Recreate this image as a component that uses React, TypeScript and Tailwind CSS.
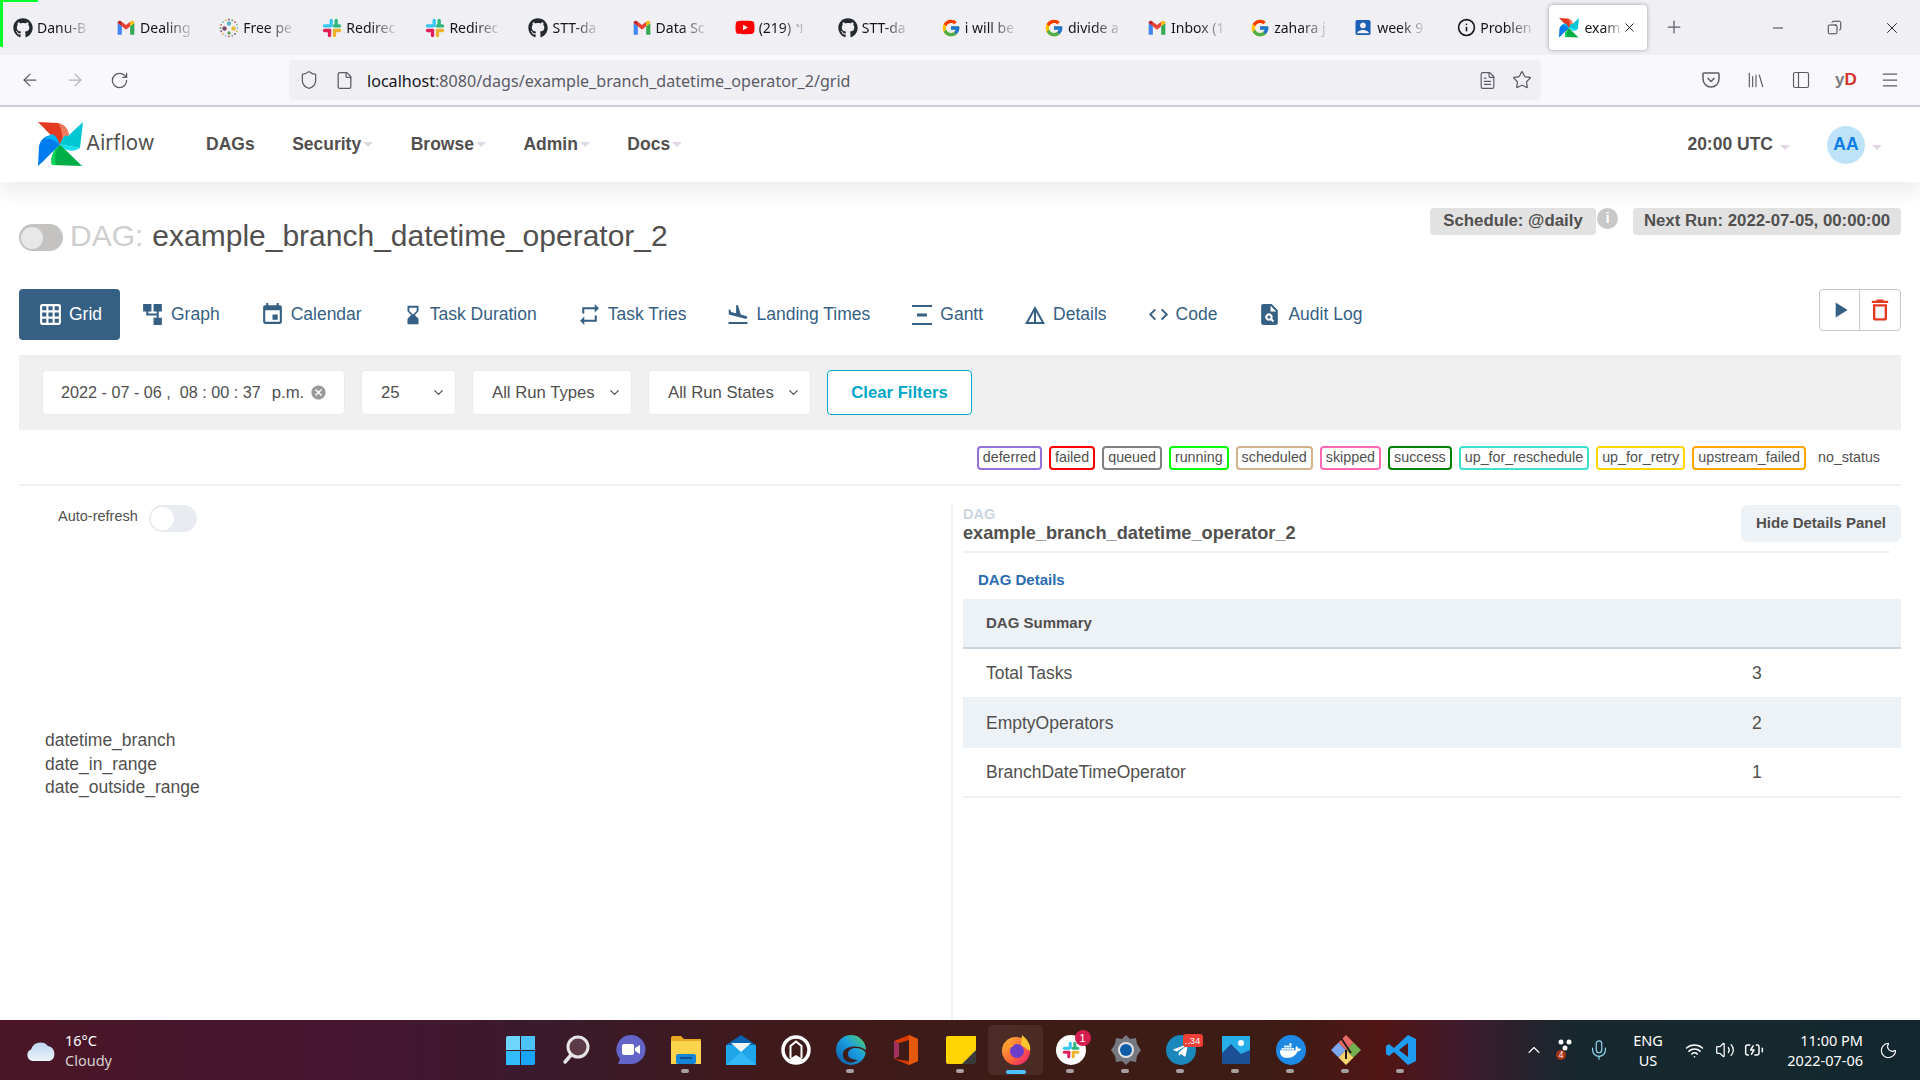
import type { ReactNode } from "react";
import { ArrowLeft, ArrowRight, RotateCw, Shield, File, Star, Menu, X, Plus, Minus, Copy, Info, ChevronDown, ChevronUp, Mic, Wifi, Volume2, Moon, BatteryCharging, FileText, PanelLeft, Library } from "lucide-react";
import { FaGithub, FaYoutube, FaDocker, FaTelegramPlane } from "react-icons/fa";
import { FcGoogle } from "react-icons/fc";
import { MdGridOn, MdAccountTree, MdEvent, MdHourglassBottom, MdRepeat, MdFlightLand, MdVerticalDistribute, MdDetails, MdCode, MdPlagiarism, MdPlayArrow, MdDeleteOutline, MdCancel, MdAccountBox } from "react-icons/md";

function PinWheel({ size = 45 }: { size?: number }) {
  return (
    <svg width={size} height={size} viewBox="0 0 45 45" className="shrink-0">
      <path d="M0 0 L20 1 C28 3 32 10 30 15 L22 22.5 Z" fill="#e43921" />
      <path d="M20 1 C28 3 32 10 30 15 L24 21 C25 14 24 7 20 1 Z" fill="#f37b5f" />
      <path d="M45 0 L42 26 L22 22.5 C24 16 27 12 30 14 Z" fill="#00c7d4" />
      <path d="M22 22.5 L42 26 L38 28 C32 30 26 28 22 22.5 Z" fill="#11e1ee" />
      <path d="M44 44 L14 43 C12 36 15 28 22 22.5 Z" fill="#00ad46" />
      <path d="M22 22.5 C18 27 16 36 18 43 L14 43 C12 36 15 28 22 22.5 Z" fill="#04d659" />
      <path d="M0 44 L1 24 C3 16 10 12 15 14 L22 22.5 C14 30 7 38 0 44 Z" fill="#017cee" />
      <path d="M12 13 C15 11 18 13 22 22.5 C17 18 12 16 6 17 Z" fill="#00b5f0" />
    </svg>
  );
}

function Gmail({ size = 20 }: { size?: number }) {
  return (
    <svg width={size} height={size} viewBox="0 0 24 24" className="shrink-0">
      <path d="M2 20 V6 l5 4 v10 H3.500 A1.500 1.500 0 0 1 2 20Z" fill="#4285f4" />
      <path d="M22 20 V6 l-5 4 v10 h3.500 A1.500 1.500 0 0 0 22 20Z" fill="#34a853" />
      <path d="M7 10 L12 14 L17 10 V4.500 L12 8.500 L7 4.500Z" fill="#ea4335" />
      <path d="M2 6 V5.500 C2 3.500 4.500 2.500 6 3.800 L7 4.500 V10Z" fill="#c5221f" />
      <path d="M22 6 V5.500 C22 3.500 19.500 2.500 18 3.800 L17 4.500 V10Z" fill="#fbbc04" />
    </svg>
  );
}

function SlackLogo({ size = 20 }: { size?: number }) {
  return (
    <svg width={size} height={size} viewBox="0 0 24 24" className="shrink-0">
      <rect x="9" y="1" width="4" height="10" rx="2" fill="#36c5f0" />
      <rect x="1" y="7.500" width="10" height="4" rx="2" fill="#36c5f0" />
      <rect x="13" y="7.500" width="10" height="4" rx="2" fill="#2eb67d" />
      <rect x="15" y="1" width="4" height="10" rx="2" fill="#2eb67d" />
      <rect x="13" y="13" width="10" height="4" rx="2" fill="#ecb22e" />
      <rect x="13" y="13" width="4" height="10" rx="2" fill="#ecb22e" />
      <rect x="1" y="13" width="10" height="4" rx="2" fill="#e01e5a" />
      <rect x="7" y="13" width="4" height="10" rx="2" fill="#e01e5a" />
    </svg>
  );
}

function Dots() {
  const cols = ["#7fb8c9", "#d8b33c", "#7b5a78", "#6b9e5a", "#c9655a"];
  const pts = Array.from({ length: 16 }, (_, i) => {
    const a = (i / 16) * Math.PI * 2;
    return [10 + Math.cos(a) * 8.5, 10 + Math.sin(a) * 8.5];
  });
  return (
    <svg width="20" height="20" viewBox="0 0 20 20" className="shrink-0">
      {pts.map((p, i) => (
        <circle key={i} cx={p[0]} cy={p[1]} r="0.900" fill={cols[i % 5]} />
      ))}
      <circle cx="10" cy="5.500" r="2.200" fill="#5bb4c4" />
      <circle cx="14.500" cy="10.500" r="2.200" fill="#e2bd3a" />
      <circle cx="5.500" cy="10.500" r="2.200" fill="#7a4a6d" />
      <circle cx="10" cy="15" r="1.800" fill="#6aa35a" />
    </svg>
  );
}

const browserTabs: { icon: ReactNode; text: string }[] = [
  { icon: <FaGithub size={20} className="text-[#24292f]" />, text: "Danu-B" },
  { icon: <Gmail />, text: "Dealing" },
  { icon: <Dots />, text: "Free pe" },
  { icon: <SlackLogo />, text: "Redirec" },
  { icon: <SlackLogo />, text: "Redirec" },
  { icon: <FaGithub size={20} className="text-[#24292f]" />, text: "STT-da" },
  { icon: <Gmail />, text: "Data Sc" },
  { icon: <FaYoutube size={21} className="text-[#ff0000]" />, text: "(219) ។" },
  { icon: <FaGithub size={20} className="text-[#24292f]" />, text: "STT-da" },
  { icon: <FcGoogle size={20} />, text: "i will be" },
  { icon: <FcGoogle size={20} />, text: "divide a" },
  { icon: <Gmail />, text: "Inbox (1" },
  { icon: <FcGoogle size={20} />, text: "zahara j" },
  { icon: <MdAccountBox size={23} className="text-[#1a5fb4]" />, text: "week 9" },
  { icon: <Info size={19} className="text-[#15141a]" />, text: "Problen" },
];

function TabStrip() {
  return (
    <div className="relative h-[55px] bg-[#f0f0f4] flex items-start pl-[3px] pt-[5px] shrink-0">
      <div className="absolute left-0 top-0 w-[38px] h-[2px] bg-[#00ff2a]" />
      <div className="absolute left-0 top-0 w-[3px] h-[47px] bg-[#00ff2a]" />
      {browserTabs.map((t, i) => (
        <div key={i} className="w-[103.100px] h-[45px] pl-[10px] flex items-center gap-[4px] shrink-0">
          <span className="w-[20px] flex justify-center shrink-0">{t.icon}</span>
          <span className="whitespace-nowrap text-[14px] text-[#15141a] [mask-image:linear-gradient(to_right,black_50%,rgba(0,0,0,0.15))] font-['Noto_Sans',sans-serif]">
            {t.text}
          </span>
        </div>
      ))}
      <div className="w-[98px] h-[45px] bg-white rounded-[4px] shadow-[0_0_4px_rgba(0,0,0,0.35)] pl-[10px] flex items-center gap-[5px] shrink-0">
        <PinWheel size={20} />
        <span className="whitespace-nowrap text-[14px] text-[#15141a] [mask-image:linear-gradient(to_right,black_55%,rgba(0,0,0,0.2))] font-['Noto_Sans',sans-serif]">
          exam
        </span>
        <X size={15} strokeWidth={1.5} className="text-[#15141a] -ml-[3px]" />
      </div>
      <Plus size={20} strokeWidth={1.5} className="text-[#5b5b66] ml-[17px] mt-[12px]" />
      <div className="ml-auto flex items-center h-[45px] pr-[19px] gap-[41px] text-[#15141a]">
        <Minus size={16} strokeWidth={1.2} />
        <Copy size={15} strokeWidth={1.3} className="-scale-x-100" />
        <X size={18} strokeWidth={1.2} />
      </div>
    </div>
  );
}

function BrowserBar() {
  return (
    <div className="h-[52px] bg-[#f9f9fb] border-b-2 border-[#cfcfd8] flex items-center shrink-0 text-[#5b5b66]">
      <div className="w-[289px] flex items-center pl-[20px] gap-[25px] shrink-0">
        <ArrowLeft size={20} strokeWidth={1.5} />
        <ArrowRight size={20} strokeWidth={1.5} className="text-[#b4b4ba]" />
        <RotateCw size={19} strokeWidth={1.6} />
      </div>
      <div className="w-[1252px] h-[40px] bg-[#f0f0f4] rounded-[4px] flex items-center pl-[10px] pr-[9px] shrink-0">
        <Shield size={20} strokeWidth={1.5} />
        <File size={19} strokeWidth={1.6} className="ml-[16px]" />
        <span className="ml-[13px] mt-[2px] text-[16.100px] whitespace-nowrap font-['Noto_Sans',sans-serif] text-[#5b5b66]">
          <span className="text-[#15141a]">localhost</span>:8080/dags/example_branch_datetime_operator_2/grid
        </span>
        <FileText size={19} strokeWidth={1.5} className="ml-auto" />
        <Star size={20} strokeWidth={1.5} className="ml-[15px]" />
      </div>
      <div className="flex-1 flex items-center pl-[160px] gap-[25px]">
        <svg width="20" height="20" viewBox="0 0 20 20" fill="none" stroke="currentColor" strokeWidth="1.500">
          <path d="M3 3 H17 Q18 3 18 4 V9 A8 8 0 0 1 2 9 V4 Q2 3 3 3Z" />
          <path d="M6.500 8 L10 11.500 L13.500 8" />
        </svg>
        <Library size={20} strokeWidth={1.4} />
        <PanelLeft size={20} strokeWidth={1.4} />
        <span className="w-[20px] -ml-[1px] text-[17px] font-bold font-['Liberation_Sans',sans-serif] whitespace-nowrap text-[#7b7b80]">
          y<span className="text-[#d6322c]">D</span>
        </span>
        <Menu size={20} strokeWidth={1.5} />
      </div>
    </div>
  );
}

function Caret() {
  return <span className="inline-block w-0 h-0 border-x-[5px] border-t-[5px] border-x-transparent border-t-[#e2d6e6]" />;
}

function NavBar() {
  const items = ["DAGs", "Security", "Browse", "Admin", "Docs"];
  return (
    <div className="relative z-10 h-[75px] bg-white shadow-[0_10px_20px_rgba(0,0,0,0.08)] flex items-center shrink-0 text-[#51504f]">
      <div className="ml-[38px] flex items-center w-[168px] shrink-0">
        <PinWheel />
        <span className="ml-[3px] -mt-[3px] text-[20.500px] font-['Inter',sans-serif] leading-none">Airflow</span>
      </div>
      <div className="flex items-center gap-[37.500px] text-[17.500px] font-bold">
        {items.map((it, i) => (
          <span key={it} className="flex items-center gap-[2px]">
            {it}
            {i > 0 && <Caret />}
          </span>
        ))}
      </div>
      <div className="ml-auto flex items-center pr-[38px]">
        <span className="text-[17.500px] font-bold">20:00 UTC</span>
        <span className="ml-[7px]"><Caret /></span>
        <span className="ml-[37px] w-[38px] h-[38px] rounded-full bg-[#bee3f8] text-[#0a7ce8] font-bold text-[17.500px] flex items-center justify-center">
          AA
        </span>
        <span className="ml-[7px]"><Caret /></span>
      </div>
    </div>
  );
}

function TitleRow() {
  return (
    <div className="h-[107px] flex items-start justify-between shrink-0">
      <div className="flex items-start">
        <span className="mt-[42px] w-[44px] h-[27px] rounded-full bg-[#c4c3c1] flex items-center pl-[2px]">
          <span className="w-[22px] h-[22px] rounded-full bg-[#e8e8e8]" />
        </span>
        <span className="ml-[7px] mt-[35px] text-[#cfcfcf] text-[30px] leading-[37px]">DAG:</span>
        <span className="ml-[9px] mt-[35px] text-[30px] leading-[37px] text-[#51504f]">example_branch_datetime_operator_2</span>
      </div>
      <div className="flex items-start mt-[26px] text-[16.800px] font-bold text-[#51504f]">
        <span className="h-[27px] pb-[1px] w-[166px] bg-[#e2e2e2] rounded-[4px] flex items-center justify-center">Schedule: @daily</span>
        <span className="ml-[1px] w-[21px] h-[21px] rounded-full bg-[#c8c8c8] text-white text-[15px] flex items-center justify-center">i</span>
        <span className="ml-[15px] h-[27px] pb-[1px] w-[268px] bg-[#e2e2e2] rounded-[4px] flex items-center justify-center">Next Run: 2022-07-05, 00:00:00</span>
      </div>
    </div>
  );
}

function ViewTabs() {
  const tabs = [
    { label: "Graph", icon: <MdAccountTree size={25} className="-scale-x-100 rotate-90" /> },
    { label: "Calendar", icon: <MdEvent size={25} /> },
    { label: "Task Duration", icon: <MdHourglassBottom size={22} /> },
    { label: "Task Tries", icon: <MdRepeat size={25} /> },
    { label: "Landing Times", icon: <MdFlightLand size={24} /> },
    { label: "Gantt", icon: <MdVerticalDistribute size={24} /> },
    { label: "Details", icon: <MdDetails size={24} /> },
    { label: "Code", icon: <MdCode size={23} /> },
    { label: "Audit Log", icon: <MdPlagiarism size={25} /> },
  ];
  return (
    <div className="h-[66px] flex items-start justify-between shrink-0">
      <div className="flex items-center text-[17.500px] text-[#365f84]">
        <span className="h-[51px] w-[101px] bg-[#365f84] text-white rounded-[4px] flex items-center pl-[19px] gap-[6px]">
          <MdGridOn size={25} />
          Grid
        </span>
        {tabs.map((t) => (
          <span key={t.label} className="h-[51px] flex items-center px-[20px] gap-[6px]">
            {t.icon}
            {t.label}
          </span>
        ))}
      </div>
      <div className="w-[82px] h-[42px] border border-[#c9c9c9] rounded-[4px] flex items-center">
        <span className="w-[40px] h-full flex items-center justify-center text-[#365f84] border-r border-[#c9c9c9]">
          <MdPlayArrow size={26} />
        </span>
        <span className="flex-1 flex items-center justify-center text-[#e43921]">
          <MdDeleteOutline size={28} />
        </span>
      </div>
    </div>
  );
}

function SelectBox({ label, width }: { label: string; width: string }) {
  return (
    <div className={`${width} h-[45px] bg-white rounded-[4px] border border-[#e6ebf1] flex items-center justify-between pl-[19px] pr-[9px] shrink-0`}>
      <span className="whitespace-nowrap">{label}</span>
      <ChevronDown size={15} strokeWidth={2} />
    </div>
  );
}

function Filters() {
  return (
    <div className="h-[75px] bg-[#f0f0f0] flex items-center pl-[23px] gap-[16px] text-[16.700px] text-[#51504f] shrink-0">
      <div className="w-[303px] h-[45px] bg-white rounded-[4px] border border-[#e6ebf1] flex items-center pl-[18px] pr-[17px] text-[16.200px] shrink-0">
        <span className="whitespace-pre">2022 - 07 - 06 ,  08 : 00 : 37</span>
        <span className="ml-[11px] text-[16.700px]">p.m.</span>
        <MdCancel size={17} className="ml-auto text-[#999]" />
      </div>
      <SelectBox label="25" width="w-[95px]" />
      <SelectBox label="All Run Types" width="w-[160px]" />
      <SelectBox label="All Run States" width="w-[163px]" />
      <div className="w-[145px] h-[45px] bg-white rounded-[4px] border border-[#00a7c7] text-[#00a7c7] font-bold flex items-center justify-center shrink-0">
        Clear Filters
      </div>
    </div>
  );
}

function Legend() {
  const states = [
    { name: "deferred", cls: "border-[#9370db]" },
    { name: "failed", cls: "border-[#ff0000]" },
    { name: "queued", cls: "border-[#808080]" },
    { name: "running", cls: "border-[#00ff00]" },
    { name: "scheduled", cls: "border-[#d2b48c]" },
    { name: "skipped", cls: "border-[#ff69b4]" },
    { name: "success", cls: "border-[#008000]" },
    { name: "up_for_reschedule", cls: "border-[#40e0d0]" },
    { name: "up_for_retry", cls: "border-[#ffd700]" },
    { name: "upstream_failed", cls: "border-[#ffa500]" },
  ];
  return (
    <div className="h-[56px] border-b-2 border-[#edf2f7] flex items-start justify-end gap-[7px] pt-[16px] pr-[21px] text-[14.300px] text-[#51504f] shrink-0">
      {states.map((s) => (
        <span key={s.name} className={`h-[24px] px-[4px] border-2 rounded-[4px] bg-white flex items-center ${s.cls}`}>
          {s.name}
        </span>
      ))}
      <span className="h-[24px] ml-[5px] flex items-center">no_status</span>
    </div>
  );
}

function GridPanel() {
  return (
    <div className="w-[932px] shrink-0 flex flex-col text-[#51504f]">
      <div className="flex items-center pl-[39px] pt-[19px]">
        <span className="text-[14.500px] mb-[4px]">Auto-refresh</span>
        <span className="ml-[11px] w-[48px] h-[27px] rounded-full bg-[#e8ecf1] flex items-center pl-[2px]">
          <span className="w-[23px] h-[23px] rounded-full bg-white" />
        </span>
      </div>
      <div className="mt-[197px] pl-[26px] text-[17.500px] leading-[23.700px]">
        <div>datetime_branch</div>
        <div>date_in_range</div>
        <div>date_outside_range</div>
      </div>
    </div>
  );
}

function DetailsPanel() {
  const rows = [
    { k: "Total Tasks", v: 3, cls: "h-[48px]" },
    { k: "EmptyOperators", v: 2, cls: "h-[51px] pt-[1px] bg-[#edf2f7]" },
    { k: "BranchDateTimeOperator", v: 1, cls: "h-[50px] border-b-2 border-[#edf2f7]" },
  ];
  return (
    <div className="flex-1 border-l-2 border-[#edf2f7] mt-[19px] pl-[10px] text-[#51504f]">
      <div className="h-[48px] flex items-start justify-between border-b-2 border-[#edf2f7] mr-[11px]">
        <div className="pt-[2px]">
          <div className="text-[14.500px] font-bold leading-[15px] text-[#cbd5e0]">DAG</div>
          <div className="text-[18.200px] font-bold leading-[23px]">example_branch_datetime_operator_2</div>
        </div>
        <div className="-mr-[11px] w-[160px] h-[37px] bg-[#edf2f7] rounded-[6px] font-bold text-[15px] flex items-center justify-center">
          Hide Details Panel
        </div>
      </div>
      <div className="h-[46px] pt-[8px] flex items-center pl-[15px] text-[15px] font-bold text-[#2b6cb0]">DAG Details</div>
      <div className="h-[50px] pt-[1px] bg-[#edf2f7] border-b-2 border-[#cbd5e0] flex items-center pl-[23px] text-[15px] font-bold">
        DAG Summary
      </div>
      {rows.map((r) => (
        <div key={r.k} className={`${r.cls} flex items-center text-[17.500px]`}>
          <span className="w-[789px] pl-[23px]">{r.k}</span>
          <span>{r.v}</span>
        </div>
      ))}
    </div>
  );
}

function Dock({ children, dot = true, active = false }: { children: ReactNode; dot?: boolean; active?: boolean }) {
  return (
    <div className={`relative w-[55px] h-[50px] flex items-center justify-center shrink-0 rounded-[5px] ${active ? "bg-white/[0.07]" : ""}`}>
      {children}
      {dot && !active && <span className="absolute bottom-[2px] left-[23px] w-[8px] h-[4px] rounded-full bg-[#a8a0a0]" />}
      {active && <span className="absolute bottom-[1px] left-[18px] w-[20px] h-[4px] rounded-full bg-[#4cc2ff]" />}
    </div>
  );
}

function Taskbar() {
  return (
    <div className="h-[60px] shrink-0 flex items-center text-white font-['Noto_Sans',sans-serif] bg-[linear-gradient(90deg,#4a1626_0%,#451530_18%,#3a1a2c_28%,#3f1a1c_40%,#3c1c14_55%,#3c1c14_66%,#511514_72%,#3f1a2c_76%,#17282e_82%,#12282e_100%)]">
      <div className="w-[493px] flex items-center pl-[26px] shrink-0">
        <svg width="30" height="24" viewBox="0 0 30 24">
          <defs>
            <linearGradient id="cloudFill" x1="0" y1="0" x2="0" y2="1">
              <stop offset="0" stopColor="#bcd6f2" />
              <stop offset="1" stopColor="#eef4fa" />
            </linearGradient>
          </defs>
          <path d="M7 23 A6 6 0 0 1 5 11.500 A10 10 0 0 1 22 8 A8 8 0 0 1 24 23 Z" fill="url(#cloudFill)" />
        </svg>
        <div className="ml-[9px] text-[14.500px] leading-[20px]">
          <div>16°C</div>
          <div className="text-[#d8d0d0]">Cloudy</div>
        </div>
      </div>
      <div className="flex items-center">
        <Dock dot={false}>
          <div className="grid grid-cols-2 gap-[1px] w-[29px] h-[29px]">
            <span className="bg-[#6fd6fb] rounded-tl-[2px]" />
            <span className="bg-[#4cc4fb]" />
            <span className="bg-[#33bcfb]" />
            <span className="bg-[#1aa5fa] rounded-br-[2px]" />
          </div>
        </Dock>
        <Dock dot={false}>
          <svg width="28" height="30" viewBox="0 0 28 30" fill="none">
            <circle cx="16" cy="12" r="10" fill="#5c3a48" stroke="#e6e4e4" strokeWidth="3" />
            <path d="M9 20 L3 27" stroke="#e6e4e4" strokeWidth="3.500" strokeLinecap="round" />
          </svg>
        </Dock>
        <Dock dot={false}>
          <svg width="30" height="30" viewBox="0 0 30 30">
            <path d="M15 0 A14.500 14.500 0 1 1 15 29 L2 29 L4 24 A14.500 14.500 0 0 1 15 0Z" fill="#6264c8" />
            <rect x="6" y="9" width="12" height="11" rx="2" fill="#fff" />
            <path d="M19 13 L24 10 V19 L19 16Z" fill="#fff" />
          </svg>
        </Dock>
        <Dock>
          <svg width="30" height="28" viewBox="0 0 30 28">
            <path d="M0 2 Q0 0 2 0 H10 L13 3 H30 V8 H0Z" fill="#e8a920" />
            <path d="M0 5 H30 V28 H0Z" fill="#fcd34d" />
            <rect x="5" y="18" width="20" height="10" rx="2" fill="#1585d8" />
            <rect x="9" y="21" width="12" height="2" fill="#0b4f8f" />
          </svg>
        </Dock>
        <Dock dot={false}>
          <svg width="30" height="30" viewBox="0 0 30 30">
            <path d="M0 10 L15 0 L30 10 V30 H0Z" fill="#0a63b0" />
            <path d="M0 10 H30 V30 H0Z" fill="#1ea5ea" />
            <path d="M5 8 H25 L15 17Z" fill="#f1f5f9" />
            <path d="M0 30 L15 17 L30 30Z" fill="#33b8f5" />
          </svg>
        </Dock>
        <Dock dot={false}>
          <svg width="30" height="30" viewBox="0 0 30 30" fill="none">
            <circle cx="15" cy="15" r="13" stroke="#fff" strokeWidth="3.500" />
            <path d="M9.500 23 V11 L15 6.500 L20.500 11 V23" stroke="#fff" strokeWidth="2" />
            <path d="M7 25 L15 20 L23 25 L15 28Z" fill="#fff" />
          </svg>
        </Dock>
        <Dock>
          <svg width="30" height="30" viewBox="0 0 30 30">
            <defs>
              <linearGradient id="edgeFill" x1="0" y1="1" x2="1" y2="0">
                <stop offset="0" stopColor="#0c59a4" />
                <stop offset="0.550" stopColor="#1b9de2" />
                <stop offset="1" stopColor="#54d45f" />
              </linearGradient>
            </defs>
            <circle cx="15" cy="15" r="15" fill="url(#edgeFill)" />
            <path d="M30 18 C26 12 14 11 12 18 C11 23 17 25 22 25 C15 30 6 27 7 18 C8 11 22 9 30 15Z" fill="#3f1d1a" />
          </svg>
        </Dock>
        <Dock dot={false}>
          <svg width="24" height="30" viewBox="0 0 24 30">
            <path d="M0 6 L15 0 L24 4 V26 L15 30 L0 24 L15 26 V5 L5 8 V21 L0 24Z" fill="#d83b01" />
            <path d="M0 6 L5 8 V21 L0 24Z" fill="#a1305e" />
            <path d="M15 0 L24 4 V26 L15 30Z" fill="#e5590f" />
          </svg>
        </Dock>
        <Dock>
          <svg width="30" height="28" viewBox="0 0 30 28">
            <path d="M0 2 Q0 0 2 0 H30 V18 L20 28 H2 Q0 28 0 26Z" fill="#ffd400" />
            <path d="M30 14 V26 Q30 28 28 28 H16Z" fill="#3a3a3a" />
          </svg>
        </Dock>
        <Dock active>
          <svg width="30" height="30" viewBox="0 0 30 30">
            <defs>
              <linearGradient id="foxFill" x1="0" y1="0" x2="1" y2="1">
                <stop offset="0" stopColor="#ffbd2e" />
                <stop offset="0.600" stopColor="#ff5e3a" />
                <stop offset="1" stopColor="#e31587" />
              </linearGradient>
            </defs>
            <circle cx="15" cy="16" r="14" fill="url(#foxFill)" />
            <path d="M21 0 C27 5 30 10 29 16 L20 10Z" fill="#ffc72e" />
            <circle cx="16" cy="16" r="7" fill="#6b3ec9" />
            <path d="M2 9 C7 7 11 8 13 11 L6 14Z" fill="#ff9a2e" />
          </svg>
        </Dock>
        <Dock>
          <div className="relative w-[30px] h-[30px] rounded-full bg-white flex items-center justify-center">
            <SlackLogo size={18} />
            <span className="absolute -top-[5px] -right-[5px] w-[16px] h-[16px] rounded-full bg-[#d41e4f] text-[11px] leading-[16px] text-center font-['Liberation_Sans',sans-serif]">1</span>
          </div>
        </Dock>
        <Dock>
          <svg width="30" height="30" viewBox="0 0 30 30">
            <path d="M15 0 L19 4 L25 3 L26 9 L30 15 L26 21 L25 27 L19 26 L15 30 L11 26 L5 27 L4 21 L0 15 L4 9 L5 3 L11 4Z" fill="#767a80" />
            <circle cx="15" cy="15" r="8" fill="#e2e4e6" />
            <circle cx="15" cy="15" r="6" fill="#0f5ca8" />
          </svg>
        </Dock>
        <Dock>
          <div className="relative w-[30px] h-[30px] rounded-full bg-[#1a87bd] flex items-center justify-center">
            <FaTelegramPlane size={17} className="text-white" />
            <span className="absolute -top-[1px] -right-[7px] w-[20px] h-[13px] rounded-[3px] bg-[#ef3e36] text-[9.500px] leading-[13px] text-center font-['Liberation_Sans',sans-serif]">..34</span>
          </div>
        </Dock>
        <Dock>
          <svg width="28" height="28" viewBox="0 0 28 28">
            <rect width="28" height="28" fill="#25aee8" />
            <circle cx="19" cy="7" r="3" fill="#fff" />
            <path d="M0 28 V17 L9 8 L19 18 L28 14 V28Z" fill="#1d4f96" />
          </svg>
        </Dock>
        <Dock>
          <span className="w-[30px] h-[30px] rounded-full bg-[#1d89e4] flex items-center justify-center">
            <FaDocker size={21} className="text-white" />
          </span>
        </Dock>
        <Dock>
          <svg width="30" height="30" viewBox="0 0 30 30">
            <path d="M7.500 7.500 L15 15 L7.500 22.500 L0 15Z" fill="#7ba7f5" />
            <path d="M22.500 7.500 L30 15 L22.500 22.500 L15 15Z" fill="#72b050" />
            <path d="M15 15 L22.500 22.500 L15 30 L7.500 22.500Z" fill="#f5d76e" />
            <path d="M15 0 L22.500 7.500 L15 15 L7.500 7.500Z" fill="#e86a64" />
            <path d="M10 3 L20 18 M15 15 V24" stroke="#2c1a1a" strokeWidth="2" fill="none" />
          </svg>
        </Dock>
        <Dock>
          <svg width="30" height="30" viewBox="0 0 30 30">
            <path d="M22 0 L30 4 V26 L22 30 L8 17 L3 21 L0 19 V11 L3 9 L8 13Z M22 8 L13 15 L22 22Z" fill="#1f9cf0" fillRule="evenodd" />
          </svg>
        </Dock>
      </div>
      <div className="ml-auto flex items-center pr-[22px] text-[14.500px]">
        <ChevronUp size={20} strokeWidth={1.3} />
        <svg width="18" height="24" viewBox="0 0 18 24" className="ml-[12px]">
          <circle cx="5" cy="4" r="2.500" fill="#fff" />
          <circle cx="13" cy="4" r="2.500" fill="#fff" />
          <circle cx="9" cy="10" r="2.500" fill="#fff" />
          <circle cx="5" cy="17" r="5" fill="#a83216" />
          <text x="5" y="20" fontSize="8" textAnchor="middle" fill="#fff">4</text>
        </svg>
        <Mic size={22} strokeWidth={1.3} className="ml-[14px] text-[#8fd8f0]" />
        <div className="ml-[18px] w-[40px] text-center leading-[20px]">
          <div>ENG</div>
          <div>US</div>
        </div>
        <Wifi size={19} strokeWidth={2} className="ml-[17px]" />
        <Volume2 size={20} strokeWidth={1.5} className="ml-[11px]" />
        <BatteryCharging size={20} strokeWidth={1.8} className="ml-[9px]" />
        <div className="ml-[9px] w-[90px] text-right leading-[20px] text-[14.500px]">
          <div>11:00 PM</div>
          <div>2022-07-06</div>
        </div>
        <Moon size={19} strokeWidth={1.4} className="ml-[16px]" />
      </div>
    </div>
  );
}

export default function App() {
  return (
    <div className="w-[1920px] h-[1080px] flex flex-col overflow-hidden bg-white font-['Liberation_Sans',Arial,sans-serif]">
      <TabStrip />
      <BrowserBar />
      <NavBar />
      <main className="flex-1 min-h-0 flex flex-col px-[19px]">
        <TitleRow />
        <ViewTabs />
        <Filters />
        <Legend />
        <div className="flex-1 min-h-0 flex">
          <GridPanel />
          <DetailsPanel />
        </div>
      </main>
      <Taskbar />
    </div>
  );
}
